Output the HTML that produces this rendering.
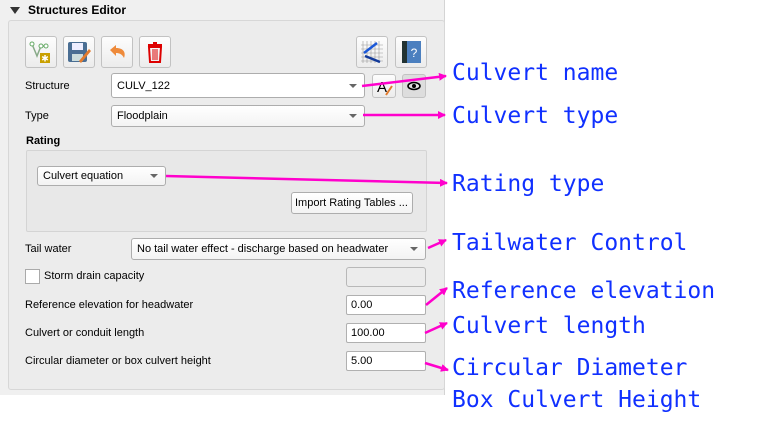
<!DOCTYPE html>
<html><head><meta charset="utf-8"><style>
body{margin:0;width:784px;height:431px;background:#fff;position:relative;overflow:hidden;font-family:"Liberation Sans",Tahoma,sans-serif;font-size:11px;color:#000}
.a{position:absolute}
.panel{left:0;top:0;width:444px;height:395px;background:#f0f0f0;border-right:1px solid #d4d4d4}
.frame{left:8px;top:20px;width:435px;height:368px;border:1px solid #d7d7d7;border-radius:3px;background:#ececec}
.btn{width:30px;height:30px;border:1px solid #c2c2c2;border-radius:3px;background:linear-gradient(#fdfdfd,#ececec)}
.cb,.pb{background:linear-gradient(#fff,#f3f3f3);border:1px solid #adadad;border-radius:3px;box-sizing:border-box;padding-left:5px;line-height:normal;display:flex;align-items:center}
.cb:after{content:"";position:absolute;right:7px;top:50%;margin-top:-2px;border-left:4px solid transparent;border-right:4px solid transparent;border-top:4px solid #666}
.in{background:#fff;border:1px solid #b0b0b0;border-radius:2px;box-sizing:border-box;padding-left:4px;display:flex;align-items:center}
.lbl{line-height:13px}
.t{font-family:"DejaVu Sans Mono","Liberation Mono",monospace;font-size:23px;color:#1030ff;left:452px;line-height:26px}
</style></head><body>
<div class="a panel"></div>
<div class="a" style="left:10px;top:7px;border-left:5px solid transparent;border-right:5px solid transparent;border-top:7px solid #333"></div>
<div class="a lbl" style="left:28px;top:4px;font-weight:bold;font-size:12px">Structures Editor</div>
<div class="a frame"></div>

<div class="a btn" style="left:25px;top:36px"><svg width="30" height="30"><polyline points="6,7 11,19 15,9 20,9" fill="none" stroke="#8a8" stroke-width="1.5"/><circle cx="6" cy="7" r="2" fill="#fff" stroke="#6a6"/><circle cx="15" cy="9" r="2" fill="#fff" stroke="#6a6"/><circle cx="20" cy="9" r="2" fill="#fff" stroke="#6a6"/><rect x="14" y="16" width="10" height="10" fill="#c9a000"/><text x="19" y="24.5" font-size="9" fill="#fff" text-anchor="middle">✱</text></svg></div>
<div class="a btn" style="left:63px;top:36px"><svg width="30" height="30"><rect x="4" y="5" width="19" height="20" rx="2" fill="#4a6e93"/><rect x="8" y="6" width="11" height="7" fill="#eef"/><rect x="8" y="17" width="11" height="7" fill="#cdd"/><path d="M15 24 L25 12 L27 14 L17 26Z" fill="#e27b2d"/></svg></div>
<div class="a btn" style="left:101px;top:36px"><svg width="30" height="30"><path d="M8 13 L14 8 L14 11 C22 11 24 16 22 21 C20 17 17 16 14 16 L14 19Z" fill="#ee8a3a"/></svg></div>
<div class="a btn" style="left:139px;top:36px"><svg width="30" height="30"><rect x="8" y="7" width="14" height="2" fill="#d00"/><rect x="13" y="5" width="4" height="2" fill="#d00"/><path d="M9 10 H21 L20 25 H10Z" fill="none" stroke="#d00" stroke-width="2"/><path d="M13 12V23M15 12V23M17 12V23" stroke="#d00"/></svg></div>
<div class="a btn" style="left:356px;top:36px"><svg width="30" height="30"><path d="M6 4V26M10 4V26M14 4V26M18 4V26M22 4V26M4 8H26M4 12H26M4 16H26M4 20H26M4 24H26" stroke="#999" stroke-width=".6"/><path d="M7 16L20 6" stroke="#1a58d8" stroke-width="2.5"/><path d="M8 19L23 25" stroke="#123a9a" stroke-width="2.5"/></svg></div>
<div class="a btn" style="left:395px;top:36px"><svg width="30" height="30"><rect x="6" y="4" width="19" height="22" fill="#4b7fbf"/><rect x="6" y="4" width="5" height="22" fill="#233"/><text x="18" y="20" font-size="12" fill="#fff" text-anchor="middle" font-family="Liberation Sans">?</text></svg></div>

<div class="a lbl" style="left:25px;top:80px">Structure</div>
<div class="a cb" style="left:111px;top:73px;width:254px;height:25px;background:#fff">CULV_122</div>
<div class="a btn" style="left:372px;top:74px;width:22px;height:22px"><svg width="22" height="22"><text x="4" y="17" font-size="15" font-family="Liberation Sans">A</text><path d="M13 20L19 11" stroke="#e27b2d" stroke-width="2"/></svg></div>
<div class="a btn" style="left:402px;top:74px;width:22px;height:22px;background:#ddd"><svg width="22" height="22"><ellipse cx="11" cy="11" rx="6" ry="3.5" fill="none" stroke="#000" stroke-width="1.6"/><circle cx="11" cy="11" r="2" fill="#000"/></svg></div>

<div class="a lbl" style="left:25px;top:110px">Type</div>
<div class="a cb" style="left:111px;top:105px;width:254px;height:22px">Floodplain</div>

<div class="a lbl" style="left:26px;top:135px;font-weight:bold">Rating</div>
<div class="a" style="left:26px;top:150px;width:399px;height:80px;border:1px solid #d4d4d4;border-radius:2px;background:#e8e8e8"></div>
<div class="a cb" style="left:37px;top:166px;width:129px;height:20px">Culvert equation</div>
<div class="a pb" style="left:291px;top:192px;width:122px;height:22px;padding-left:3px">Import Rating Tables ...</div>

<div class="a lbl" style="left:25px;top:243px">Tail water</div>
<div class="a cb" style="left:131px;top:238px;width:295px;height:22px">No tail water effect - discharge based on headwater</div>
<div class="a" style="left:25px;top:269px;width:13px;height:13px;background:#fff;border:1px solid #aaa"></div>
<div class="a lbl" style="left:44px;top:270px">Storm drain capacity</div>
<div class="a" style="left:346px;top:267px;width:78px;height:18px;border:1px solid #b8b8b8;border-radius:3px;background:#ececec"></div>
<div class="a lbl" style="left:25px;top:299px">Reference elevation for headwater</div>
<div class="a in" style="left:346px;top:295px;width:80px;height:20px">0.00</div>
<div class="a lbl" style="left:25px;top:327px">Culvert or conduit length</div>
<div class="a in" style="left:346px;top:323px;width:80px;height:20px">100.00</div>
<div class="a lbl" style="left:25px;top:355px">Circular diameter or box culvert height</div>
<div class="a in" style="left:346px;top:351px;width:80px;height:20px">5.00</div>

<svg class="a" style="left:0;top:0" width="784" height="431">
<defs><marker id="m" markerWidth="8" markerHeight="8" refX="7" refY="4" orient="auto" markerUnits="userSpaceOnUse"><path d="M0 0L8 4L0 8Z" fill="#f0c"/></marker></defs>
<g stroke="#f0c" stroke-width="2.5" marker-end="url(#m)">
<line x1="362" y1="86" x2="446" y2="76"/>
<line x1="363" y1="115" x2="445" y2="115"/>
<line x1="166" y1="176" x2="447" y2="183"/>
<line x1="428" y1="248" x2="446" y2="240"/>
<line x1="426" y1="305" x2="447" y2="288"/>
<line x1="425" y1="333" x2="447" y2="323"/>
<line x1="425" y1="363" x2="448" y2="370"/>
</g></svg>

<div class="a t" style="top:60px">Culvert name</div>
<div class="a t" style="top:103px">Culvert type</div>
<div class="a t" style="top:171px">Rating type</div>
<div class="a t" style="top:230px">Tailwater Control</div>
<div class="a t" style="top:278px">Reference elevation</div>
<div class="a t" style="top:313px">Culvert length</div>
<div class="a t" style="top:355px">Circular Diameter</div>
<div class="a t" style="top:387px">Box Culvert Height</div>
</body></html>
